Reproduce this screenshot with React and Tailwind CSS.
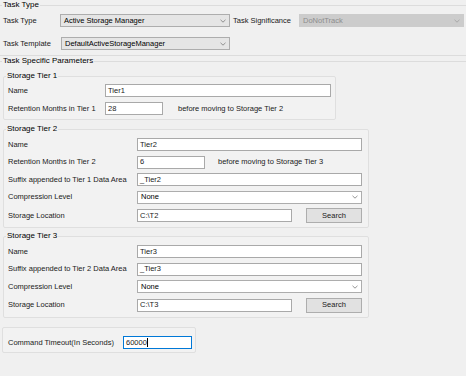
import React from 'react';

const font = "font-['Liberation_Sans',Arial,sans-serif]";

function Chevron({ className = 'text-[#7a7a7a]' }) {
  return (
    <svg width="6" height="4" viewBox="0 0 6 4" className={className}>
      <path d="M0.5 0.8 L3 3.2 L5.5 0.8" fill="none" stroke="currentColor" strokeWidth="0.8" />
    </svg>
  );
}

function Combo({ value, className = '', bg = 'bg-[#e5e5e5]', disabled = false }) {
  return (
    <div className={`flex items-center justify-between h-[13px] border pl-[3px] pr-[3px] ${bg} ${disabled ? 'border-[#cccccc] text-[#8d8d8d]' : 'border-[#adadad] text-black'} ${className}`}>
      <span className="leading-none">{value}</span>
      <Chevron className={disabled ? 'text-[#a0a0a0]' : 'text-[#7a7a7a]'} />
    </div>
  );
}

function TextBox({ value, className = '' }) {
  return (
    <div className={`flex items-center h-[13px] bg-white border border-[#a9a9a9] pl-[2px] ${className}`}>
      <span className="leading-none">{value}</span>
    </div>
  );
}

function Row({ label, labelWidth, children }) {
  return (
    <div className="flex items-center">
      <span className="shrink-0 leading-none" style={{ width: labelWidth }}>{label}</span>
      {children}
    </div>
  );
}

function Group({ title, className = '', children }) {
  return (
    <fieldset className={`border border-[#dfdfdf] bg-[#f2f2f2] rounded-[2px] ${className}`}>
      <legend className="ml-[2px] px-[1px] text-[8px] leading-[10px] h-[10px] text-black">{title}</legend>
      {children}
    </fieldset>
  );
}

function SearchButton() {
  return (
    <div className="flex items-center justify-center w-[56px] h-[15px] bg-[#e1e1e1] border border-[#adadad] leading-none">
      Search
    </div>
  );
}

export default function App() {
  return (
    <div className={`w-[466px] h-[376px] bg-[#f0f0f0] text-[7.5px] text-[#1a1a1a] overflow-hidden ${font}`}>
      {/* Task Type */}
      <fieldset className="border-t border-b border-[#dcdcdc] pb-[5px]">
        <legend className="ml-[2px] px-[1px] text-[8px] leading-[10px] h-[10px] text-black">Task Type</legend>
        <div className="pl-[3px] pt-[4px] flex flex-col gap-[10px]">
          <div className="flex items-center">
            <span className="w-[57px] leading-none">Task Type</span>
            <Combo value="Active Storage Manager" className="w-[170px]" />
            <span className="ml-[3px] w-[66px] leading-none">Task Significance</span>
            <Combo value="DoNotTrack" className="w-[165px]" bg="bg-[#cccccc]" disabled />
          </div>
          <div className="flex items-center">
            <span className="w-[58px] leading-none">Task Template</span>
            <Combo value="DefaultActiveStorageManager" className="w-[169px]" />
          </div>
        </div>
      </fieldset>

      {/* Task Specific Parameters */}
      <fieldset className="border-t border-[#dcdcdc]">
        <legend className="ml-[2px] px-[1px] text-[8px] leading-[10px] h-[10px] text-black">Task Specific Parameters</legend>
        <div className="pt-[5px] pl-[3px] flex flex-col">
          <Group title="Storage Tier 1" className="w-[333px]">
            <div className="pt-[3px] pb-[4px] pl-[4px] flex flex-col gap-[5px]">
              <Row label="Name" labelWidth={97}>
                <TextBox value="Tier1" className="w-[226px]" />
              </Row>
              <Row label="Retention Months in Tier 1" labelWidth={97}>
                <TextBox value="28" className="w-[58px]" />
                <span className="ml-[15px] leading-none">before moving to Storage Tier 2</span>
              </Row>
            </div>
          </Group>

          <Group title="Storage Tier 2" className="w-[366px] mt-[4px]">
            <div className="pt-[4px] pb-[4px] pl-[4px] flex flex-col gap-[4.5px]">
              <Row label="Name" labelWidth={129}>
                <TextBox value="Tier2" className="w-[225px]" />
              </Row>
              <Row label="Retention Months in Tier 2" labelWidth={129}>
                <TextBox value="6" className="w-[68px]" />
                <span className="ml-[13px] leading-none">before moving to Storage Tier 3</span>
              </Row>
              <Row label="Suffix appended to Tier 1 Data Area" labelWidth={129}>
                <TextBox value="_Tier2" className="w-[225px]" />
              </Row>
              <Row label="Compression Level" labelWidth={129}>
                <Combo value="None" bg="bg-white" className="w-[225px]" />
              </Row>
              <Row label="Storage Location" labelWidth={129}>
                <TextBox value="C:\T2" className="w-[155px]" />
                <div className="ml-[14px]"><SearchButton /></div>
              </Row>
            </div>
          </Group>

          <Group title="Storage Tier 3" className="w-[366px] mt-[3px]">
            <div className="pt-[4px] pb-[4.5px] pl-[4px] flex flex-col gap-[4.5px]">
              <Row label="Name" labelWidth={129}>
                <TextBox value="Tier3" className="w-[225px]" />
              </Row>
              <Row label="Suffix appended to Tier 2 Data Area" labelWidth={129}>
                <TextBox value="_Tier3" className="w-[225px]" />
              </Row>
              <Row label="Compression Level" labelWidth={129}>
                <Combo value="None" bg="bg-white" className="w-[225px]" />
              </Row>
              <Row label="Storage Location" labelWidth={129}>
                <TextBox value="C:\T3" className="w-[155px]" />
                <div className="ml-[14px]"><SearchButton /></div>
              </Row>
            </div>
          </Group>
        </div>
      </fieldset>

      {/* Command Timeout */}
      <div className="ml-[2px] mt-[9px] w-[194px] border border-[#dfdfdf] bg-[#f2f2f2] rounded-[2px] pt-[8px] pb-[3px] pl-[5px]">
        <div className="flex items-center">
          <span className="w-[115px] leading-none">Command Timeout(In Seconds)</span>
          <div className="flex items-center w-[69px] h-[13px] bg-white border border-[#0078d7] pl-[2px]">
            <span className="leading-none">60000</span>
            <span className="w-px h-[9px] bg-black" />
          </div>
        </div>
      </div>
    </div>
  );
}
